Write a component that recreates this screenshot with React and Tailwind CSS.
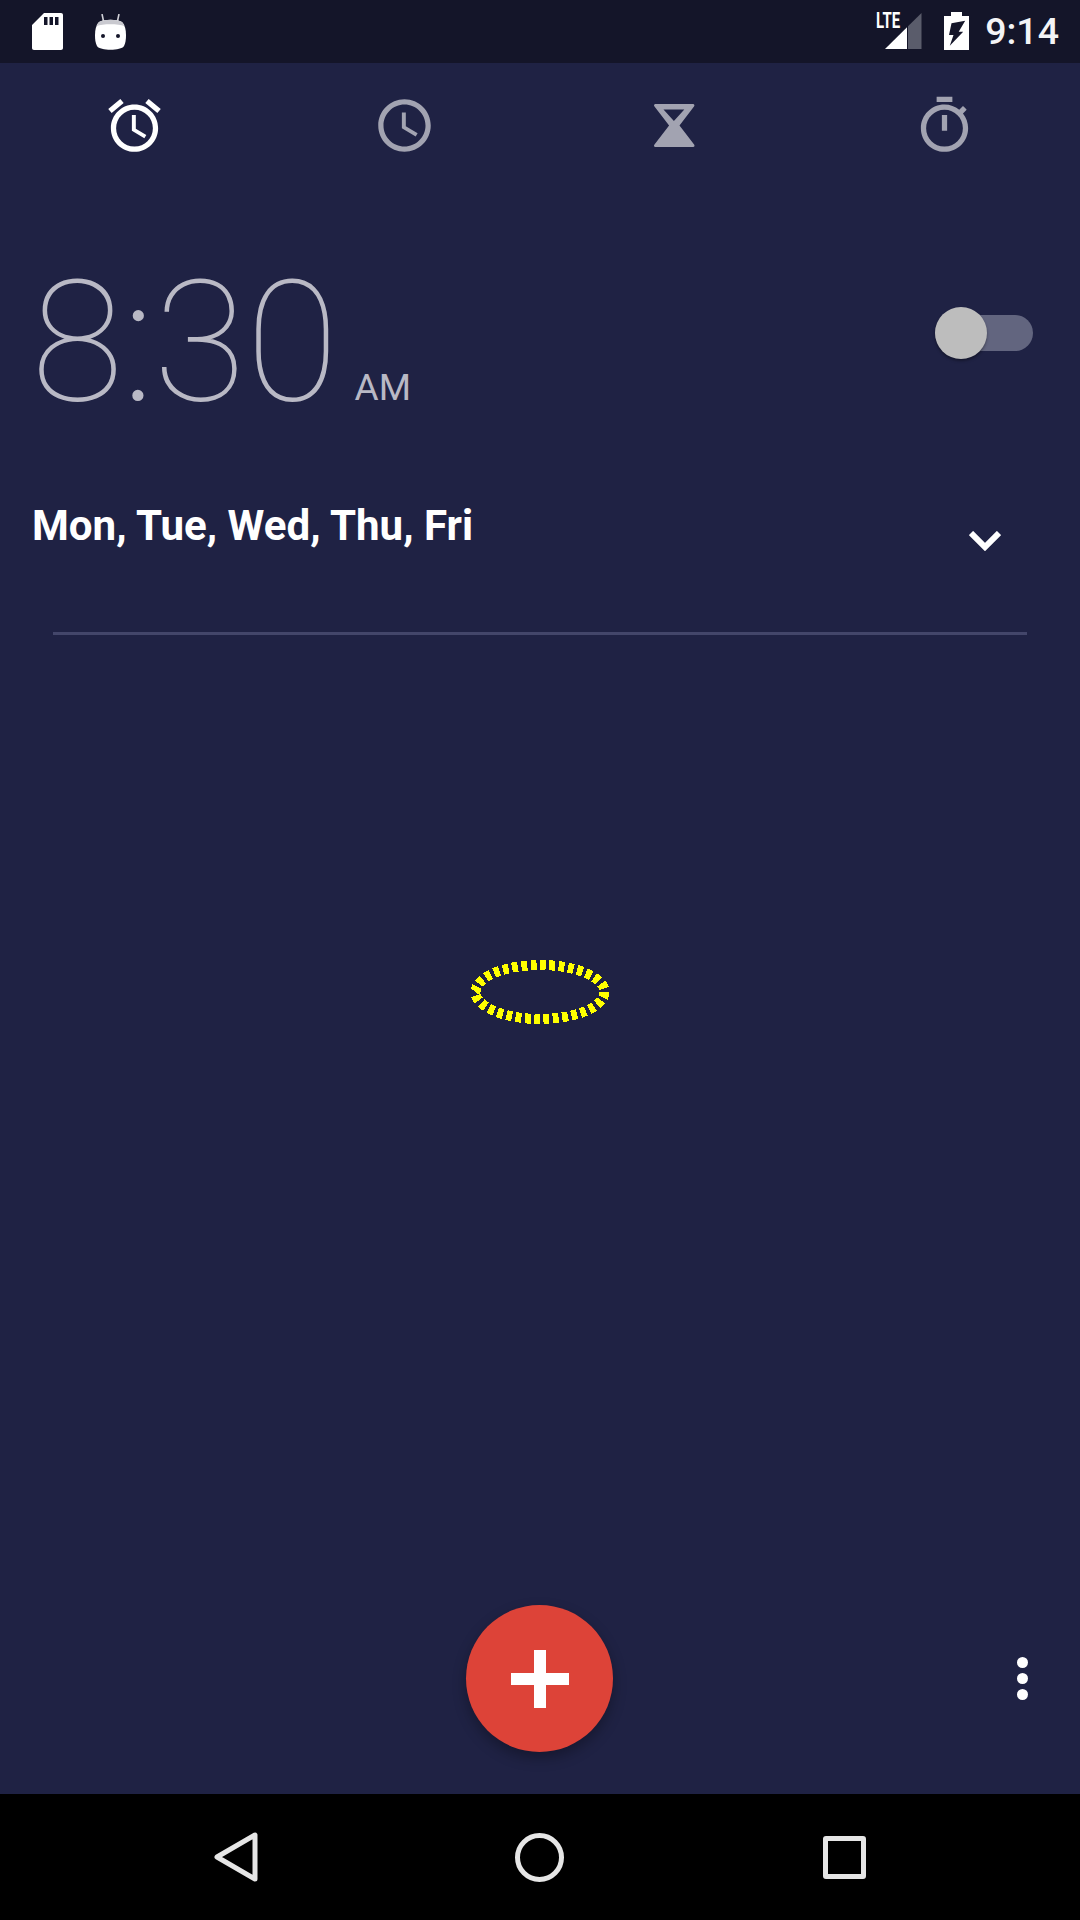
const roboto = "font-['Roboto','Noto_Sans',sans-serif]"

function TabIcon({ d, active }) {
  return (
    <svg viewBox="0 0 24 24" className={`w-[63px] h-[63px] ${active ? 'fill-white' : 'fill-[#a2a3b1]'}`}>
      <path d={d} />
    </svg>
  )
}

function Hourglass() {
  return (
    <svg viewBox="643.5 94 63 63" className="w-[63px] h-[63px] fill-[#a2a3b1]">
      <path
        fillRule="evenodd"
        d="M656 104h37.500c1.500 0 1.800 1.600 1 2.600L680 125.500l14.600 18.900c.8 1 .4 2.600-1 2.600H656c-1.500 0-2-1.600-1-2.600l14.600-18.900L655 106.600c-.9-1-.5-2.600 1-2.600zM664 109.400l10.400 11.600 10.400-11.600z"
      />
    </svg>
  )
}

function SdCard() {
  return (
    <svg viewBox="32 13 31 37" className="w-[31px] h-[37px] fill-white">
      <path
        fillRule="evenodd"
        d="M44 13h17c1.200 0 2 .8 2 2v33c0 1.200-.8 2-2 2H34c-1.200 0-2-.8-2-2V25zM44 17v8h3.500v-8zM49.500 17v8H53v-8zM55 17v8h3.500v-8z"
      />
    </svg>
  )
}

function AndroidHead() {
  return (
    <svg viewBox="95 11 31 36" className="w-[31px] h-[36px]">
      <path d="M102 11l1.500 7M119 11l-1.500 7" stroke="#d0d0d6" strokeWidth="1.600" fill="none" />
      <path d="M99 19c5-3 18-3 23 0 3 3 4 8 4 13s-.5 8-2 11c-3 5-24 5-27 0-1.500-3-2-6-2-11s1-10 4-13z" fill="#fff" />
      <path d="M96.600 23c.5-1.500 1.400-3 2.400-4 5-3 18-3 23 0 1 1 1.900 2.500 2.400 4-6-2.500-22-2.500-27.800 0z" fill="#c9c9cf" />
      <circle cx="103" cy="33" r="2" fill="#141529" />
      <circle cx="118" cy="33" r="2" fill="#141529" />
    </svg>
  )
}

export default function App() {
  return (
    <div className={`w-[1080px] h-[1920px] flex flex-col bg-[#1f2244] text-white overflow-hidden ${roboto}`}>
      {/* status bar */}
      <div className="h-[63px] bg-[#141529] flex items-center shrink-0">
        <div className="ml-[32px]"><SdCard /></div>
        <div className="ml-[32px]"><AndroidHead /></div>
        <div className="ml-auto flex items-center">
          <div className="relative w-[46px] h-[49px]">
            <svg viewBox="876 7 46 49" className="w-[46px] h-[49px]">
              <path d="M908 26.300L921.500 13v36H908z" fill="#5a5c6b" />
              <path d="M907 27.300V49h-22z" fill="#fff" />
            </svg>
            <span className="absolute left-0 top-[3px] text-[22px] leading-[22px] font-bold scale-x-[0.68] origin-left">LTE</span>
          </div>
          <svg viewBox="943 12 25 38" className="ml-[22px] mb-[2px] w-[25px] h-[38px] fill-white">
            <path
              fillRule="evenodd"
              d="M950 12h11v4h7v34h-25V16h7zM950.500 23.300L964.200 20.700 957.700 31.700H962.200L948.800 45.700 952.500 35H948z"
            />
          </svg>
          <span className="ml-[16px] mr-[21px] text-[37.5px] leading-[63px] font-medium text-[#f4f4f6]">9:14</span>
        </div>
      </div>

      {/* tabs */}
      <div className="grid grid-cols-4 h-[62px] mt-[31px] pr-[1px] justify-items-center shrink-0">
        <TabIcon active d="M22 5.720l-4.600-3.860-1.290 1.530 4.600 3.860L22 5.720zM7.880 3.390L6.600 1.860 2 5.710l1.290 1.530 4.590-3.850zM12.500 8H11v6l4.750 2.850.75-1.230-4-2.370V8zM12 4c-4.970 0-9 4.030-9 9s4.020 9 9 9c4.970 0 9-4.030 9-9s-4.030-9-9-9zm0 16c-3.870 0-7-3.130-7-7s3.130-7 7-7 7 3.130 7 7-3.130 7-7 7z" />
        <TabIcon d="M11.990 2C6.470 2 2 6.480 2 12s4.470 10 9.990 10C17.520 22 22 17.520 22 12S17.520 2 11.990 2zM12 20c-4.420 0-8-3.580-8-8s3.580-8 8-8 8 3.580 8 8-3.580 8-8 8zM12.500 7H11v6l5.250 3.150.75-1.230-4.500-2.670z" />
        <Hourglass />
        <TabIcon d="M15 1H9v2h6V1zm-4 13h2V8h-2v6zm8.030-6.610l1.420-1.420c-.43-.51-.9-.99-1.410-1.410l-1.420 1.420C16.070 4.740 14.120 4 12 4c-4.970 0-9 4.030-9 9s4.020 9 9 9 9-4.030 9-9c0-2.120-.74-4.070-1.970-5.610zM12 20c-3.870 0-7-3.130-7-7s3.130-7 7-7 7 3.130 7 7-3.130 7-7 7z" />
      </div>

      {/* alarm row */}
      <div className="flex items-start justify-between mt-[96px] pl-[31px] pr-[47px] shrink-0">
        <div className="flex items-baseline text-[#b9b9c5] h-[180px]">
          <span className="text-[169px] leading-[180px] font-thin">8<span className="[-webkit-text-stroke:2px_#b9b9c5]">:</span>30</span>
          <span className="ml-[16px] text-[37px] leading-none">AM</span>
        </div>
        <div className="relative w-[98px] h-[52px] mt-[55px] flex items-center">
          <div className="w-full h-[36px] rounded-full bg-[#62657f]" />
          <div className="absolute left-0 top-0 w-[52px] h-[52px] rounded-full bg-[#bdbdbd] shadow-[0_2px_3px_rgba(0,0,0,0.35)]" />
        </div>
      </div>

      <div className="flex items-start justify-between mt-[65px] pl-[32px] pr-[79px] shrink-0">
        <span className="text-[42.1px] leading-[58px] font-bold">Mon, Tue, Wed, Thu, Fri</span>
        <svg viewBox="0 0 32 20" className="w-[32px] h-[20px] mt-[34px] fill-none stroke-white stroke-[6]">
          <path d="M2 2l14 14L30 2" />
        </svg>
      </div>

      <div className="h-[3px] bg-[#43466a] mx-[53px] mt-[77px] shrink-0" />

      {/* dotted ellipse in the empty area */}
      <div className="flex justify-center mt-[324px] pr-[1px] shrink-0">
        <svg viewBox="0 0 140 66" className="w-[140px] h-[66px] fill-none" shapeRendering="crispEdges">
          <ellipse cx="70" cy="33" rx="64.500" ry="27" stroke="#ffff00" strokeWidth="10" pathLength="320" strokeDasharray="6.200 3.800" />
        </svg>
      </div>

      {/* fab row */}
      <div className="mt-auto grid grid-cols-3 items-center pb-[42px] shrink-0">
        <div />
        <div className="flex justify-center pr-[1px]">
          <div className="w-[147px] h-[147px] rounded-full bg-[#dd4338] flex items-center justify-center shadow-[0_6px_14px_rgba(0,0,0,0.3)]">
            <svg viewBox="0 0 58 58" className="w-[58px] h-[58px] fill-white">
              <path d="M23 0h12v23h23v12H35v23H23V35H0V23h23z" />
            </svg>
          </div>
        </div>
        <div className="flex flex-col items-end gap-[5px] pr-[52px]">
          <div className="w-[11px] h-[11px] rounded-full bg-white" />
          <div className="w-[11px] h-[11px] rounded-full bg-white" />
          <div className="w-[11px] h-[11px] rounded-full bg-white" />
        </div>
      </div>

      {/* nav bar */}
      <div className="h-[126px] bg-black flex items-center justify-center shrink-0">
        <div className="w-[304px] flex justify-center pl-[1px]">
          <svg viewBox="0 0 46 52" className="w-[46px] h-[52px] fill-none stroke-[#e6e6e6] stroke-[5]" strokeLinejoin="round">
            <path d="M3 26L41 4v44z" />
          </svg>
        </div>
        <div className="w-[304px] flex justify-center pr-[1px]">
          <div className="w-[49px] h-[49px] rounded-full border-[5px] border-[#e6e6e6]" />
        </div>
        <div className="w-[304px] flex justify-center">
          <div className="w-[43px] h-[43px] rounded-[3px] border-[5px] border-[#e6e6e6]" />
        </div>
      </div>
    </div>
  )
}
